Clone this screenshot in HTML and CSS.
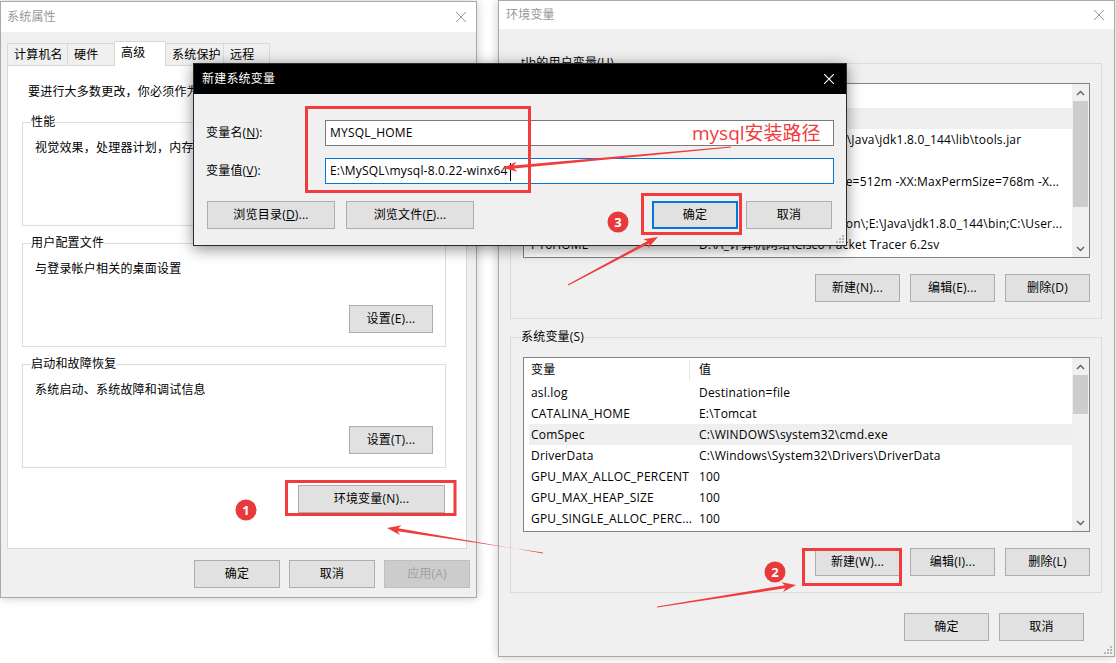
FILE: index.html
```html
<!DOCTYPE html>
<html lang="zh-CN">
<head>
<meta charset="utf-8">
<title>新建系统变量</title>
<link rel="stylesheet" href="styles.css">
</head>
<body>
<div class="desk">

  <section class="win win-env">
    <header class="tbar">
      <span class="ttl">环境变量</span>
      <svg class="xic" viewBox="0 0 10 10"><path d="M0 0L10 10M10 0L0 10" stroke="currentColor" stroke-width="1" fill="none"/></svg>
    </header>
    <div class="env-body">
      <fieldset class="grp-lg">
        <legend>tlh的用户变量(U)</legend>
        <div class="lv">
          <div class="lv-main">
            <div class="lv-row lv-head"><span class="c1">变量</span><span class="c2">值</span></div>
            <div class="lv-row sel"><span class="c1">ANDROID_HOME</span><span class="c2">E:\Android\sdk</span></div>
            <div class="lv-row"><span class="c1">CLASSPATH</span><span class="c2">%JAVA_HOME%\lib\ext\;E:\Java\jdk1.8.0_144\lib\tools.jar</span></div>
            <div class="lv-row"><span class="c1">JAVA_HOME</span><span class="c2">E:\Java\jdk1.8.0_144</span></div>
            <div class="lv-row"><span class="c1">JAVA_OPTS</span><span class="c2">-Xms10240m -XX:PermSize=512m -XX:MaxPermSize=768m -X...</span></div>
            <div class="lv-row"><span class="c1">OneDrive</span><span class="c2">C:\Users\tlh\OneDrive</span></div>
            <div class="lv-row"><span class="c1">Path</span><span class="c2">%JRE_HOME%\bin;E:\Python\;E:\Java\jdk1.8.0_144\bin;C:\User...</span></div>
            <div class="lv-row"><span class="c1">PT6HOME</span><span class="c2">D:\A_计算机网络\Cisco Packet Tracer 6.2sv</span></div>
          </div>
          <div class="sb">
            <span class="sb-btn"><svg class="chev" viewBox="0 0 9 6"><path d="M1 5L4.5 1.5L8 5" /></svg></span>
            <span class="sb-track"><span class="sb-thumb th-u"></span></span>
            <span class="sb-btn"><svg class="chev" viewBox="0 0 9 6"><path d="M1 1L4.5 4.5L8 1" /></svg></span>
          </div>
        </div>
        <div class="lv-btns">
          <button class="btn w85">新建(N)...</button>
          <button class="btn w85">编辑(E)...</button>
          <button class="btn w85">删除(D)</button>
        </div>
      </fieldset>

      <fieldset class="grp-lg grp-lg2">
        <legend>系统变量(S)</legend>
        <div class="lv">
          <div class="lv-main">
            <div class="lv-row lv-head"><span class="c1">变量</span><span class="c2">值</span></div>
            <div class="lv-row"><span class="c1">asl.log</span><span class="c2">Destination=file</span></div>
            <div class="lv-row"><span class="c1">CATALINA_HOME</span><span class="c2">E:\Tomcat</span></div>
            <div class="lv-row sel"><span class="c1">ComSpec</span><span class="c2">C:\WINDOWS\system32\cmd.exe</span></div>
            <div class="lv-row"><span class="c1">DriverData</span><span class="c2">C:\Windows\System32\Drivers\DriverData</span></div>
            <div class="lv-row"><span class="c1">GPU_MAX_ALLOC_PERCENT</span><span class="c2">100</span></div>
            <div class="lv-row"><span class="c1">GPU_MAX_HEAP_SIZE</span><span class="c2">100</span></div>
            <div class="lv-row"><span class="c1">GPU_SINGLE_ALLOC_PERC...</span><span class="c2">100</span></div>
          </div>
          <div class="sb">
            <span class="sb-btn"><svg class="chev" viewBox="0 0 9 6"><path d="M1 5L4.5 1.5L8 5" /></svg></span>
            <span class="sb-track"><span class="sb-thumb th-s"></span></span>
            <span class="sb-btn"><svg class="chev" viewBox="0 0 9 6"><path d="M1 1L4.5 4.5L8 1" /></svg></span>
          </div>
        </div>
        <div class="lv-btns">
          <button class="btn w85">新建(W)...</button>
          <button class="btn w85">编辑(I)...</button>
          <button class="btn w85">删除(L)</button>
        </div>
      </fieldset>

      <div class="env-foot">
        <button class="btn w85">确定</button>
        <button class="btn w85">取消</button>
      </div>
    </div>
    <svg class="grip grip-env" viewBox="0 0 9 9"><g fill="#b5b5b5"><rect x="7" y="1" width="2" height="2"/><rect x="4" y="4" width="2" height="2"/><rect x="7" y="4" width="2" height="2"/><rect x="1" y="7" width="2" height="2"/><rect x="4" y="7" width="2" height="2"/><rect x="7" y="7" width="2" height="2"/></g></svg>
  </section>

  <section class="win win-sys">
    <header class="tbar">
      <span class="ttl">系统属性</span>
      <svg class="xic" viewBox="0 0 10 10"><path d="M0 0L10 10M10 0L0 10" stroke="currentColor" stroke-width="1" fill="none"/></svg>
    </header>
    <div class="sys-body">
      <nav class="tabs">
        <span class="tab tab-1">计算机名</span>
        <span class="tab tab-2">硬件</span>
        <span class="tab tab-3 on">高级</span>
        <span class="tab tab-4">系统保护</span>
        <span class="tab tab-5">远程</span>
      </nav>
      <div class="panel">
        <p class="intro">要进行大多数更改，你必须作为管理员登录。</p>
        <fieldset class="grp grp-first">
          <legend>性能</legend>
          <p class="desc">视觉效果，处理器计划，内存使用，以及虚拟内存</p>
          <div class="grp-foot"><button class="btn w84">设置(S)...</button></div>
        </fieldset>
        <fieldset class="grp">
          <legend>用户配置文件</legend>
          <p class="desc">与登录帐户相关的桌面设置</p>
          <div class="grp-foot"><button class="btn w84">设置(E)...</button></div>
        </fieldset>
        <fieldset class="grp">
          <legend>启动和故障恢复</legend>
          <p class="desc">系统启动、系统故障和调试信息</p>
          <div class="grp-foot"><button class="btn w84">设置(T)...</button></div>
        </fieldset>
        <div class="env-row"><button class="btn w147">环境变量(N)...</button></div>
      </div>
      <div class="sys-foot">
        <button class="btn w86">确定</button>
        <button class="btn w86">取消</button>
        <button class="btn w86 btn-dis">应用(A)</button>
      </div>
    </div>
  </section>

  <section class="dlg">
    <header class="dbar">
      <span>新建系统变量</span>
      <svg class="xic" viewBox="0 0 10 10"><path d="M0 0L10 10M10 0L0 10" stroke="currentColor" stroke-width="1.1" fill="none"/></svg>
    </header>
    <div class="dbody">
      <div class="field">
        <span class="flabel">变量名(<u>N</u>):</span>
        <div class="input">MYSQL_HOME</div>
      </div>
      <div class="field">
        <span class="flabel">变量值(<u>V</u>):</span>
        <div class="input focus">E:\MySQL\mysql-8.0.22-winx64<span class="caret"></span></div>
      </div>
      <div class="dbtns">
        <div class="bgrp">
          <button class="btn w128">浏览目录(<u>D</u>)...</button>
          <button class="btn w128">浏览文件(<u>F</u>)...</button>
        </div>
        <div class="bgrp bgrp-r">
          <button class="btn w86 btn-def">确定</button>
          <button class="btn w86">取消</button>
        </div>
      </div>
    </div>
    <svg class="grip" viewBox="0 0 9 9"><g fill="#b5b5b5"><rect x="7" y="1" width="2" height="2"/><rect x="4" y="4" width="2" height="2"/><rect x="7" y="4" width="2" height="2"/><rect x="1" y="7" width="2" height="2"/><rect x="4" y="7" width="2" height="2"/><rect x="7" y="7" width="2" height="2"/></g></svg>
  </section>

  <svg class="marks" viewBox="0 0 1116 663">
    <g fill="none" stroke="#f03c3c" stroke-width="3">
      <rect x="286.5" y="481.5" width="168.5" height="33"/>
      <rect x="803.5" y="549.5" width="97" height="35"/>
      <rect x="306.5" y="107.5" width="223" height="84"/>
      <rect x="642.5" y="194.5" width="98" height="39"/>
    </g>
    <g fill="#f03c3c">
      <polygon points="543,553.4 398.1,528.2 401.6,525.3 387,528 400,535.1 397.7,531.2 543,552.6"/>
      <polygon points="657,607.4 785.3,588.2 783,592.1 796,585 781.4,582.3 784.9,585.2 657,606.6"/>
      <polygon points="568.3,285.4 649,243.5 648,248 658,237 643.3,239.2 647.6,240.9 567.7,284.6"/>
      <polygon points="731,146.6 513.9,165.5 516.4,161.7 503,168 517.4,171.7 514.1,168.5 731,147.4"/>
    </g>
    <g class="badge">
      <circle cx="246" cy="510" r="10.5"/>
      <circle cx="775" cy="572" r="10.5"/>
      <circle cx="618" cy="222" r="10.5"/>
    </g>
    <g class="badge-t">
      <text x="246" y="514.5">1</text>
      <text x="775" y="576.5">2</text>
      <text x="618" y="226.5">3</text>
    </g>
  </svg>
  <div class="note">mysql安装路径</div>

</div>
</body>
</html>
```

FILE: styles.css
```css
* { box-sizing: border-box; }
html, body { margin: 0; height: 100%; }
body {
  background: #fff;
  color: #000;
  font: 12px/16px "Open Sans", "Noto Sans CJK SC", sans-serif;
  letter-spacing: 0.2px;
  overflow: hidden;
}
p { margin: 0; }
u { text-decoration: underline; text-underline-offset: 1px; }

.desk { position: relative; width: 1116px; height: 663px; overflow: hidden; }

/* windows */
.win {
  position: absolute;
  background: #f0f0f0;
  border: 1px solid #a9a9a9;
  box-shadow: 0 0 9px rgba(0, 0, 0, .22);
  display: flex;
  flex-direction: column;
}
.win-sys { left: 0; top: 1px; width: 477px; height: 597px; }
.win-env { left: 498px; top: 0; width: 617px; height: 657px; }

.tbar {
  flex: none;
  background: #fff;
  color: #999;
  display: flex;
  align-items: center;
  justify-content: space-between;
}
.win-sys .tbar { height: 30px; padding: 0 10px 0 6px; }
.win-env .tbar { height: 28px; padding: 0 10px 0 7px; }
.xic { display: block; width: 10px; height: 10px; }

/* buttons */
.btn {
  flex: none;
  height: 28px;
  padding: 0;
  border: 1px solid #adadad;
  background: #e1e1e1;
  color: #000;
  font: inherit;
  letter-spacing: inherit;
  line-height: 26px;
  text-align: center;
  white-space: nowrap;
}
.w84 { width: 84px; }
.w85 { width: 85px; }
.w86 { width: 86px; }
.w128 { width: 128px; }
.w147 { width: 147px; }
.btn-dis { background: #cccccc; border-color: #bfbfbf; color: #a0a0a0; }
.btn-def { border: 2px solid #0078d7; line-height: 24px; }

/* system properties window */
.sys-body { padding: 9px 6px 0 6px; }
.tabs { display: flex; align-items: flex-end; height: 24px; }
.tab {
  height: 22px;
  margin-left: -1px;
  padding-left: 6px;
  border: 1px solid #d9d9d9;
  border-bottom: 0;
  background: #f0f0f0;
  line-height: 21px;
  white-space: nowrap;
}
.tab:first-child { margin-left: 0; }
.tab-1 { width: 61px; }
.tab-2 { width: 48px; }
.tab-3 { width: 52px; }
.tab-4 { width: 59px; }
.tab-5 { width: 47px; }
.tab.on { height: 25px; margin-bottom: -1px; background: #fff; position: relative; z-index: 1; }

.panel {
  width: 460px;
  height: 484px;
  background: #fff;
  border: 1px solid #d9d9d9;
  padding: 18px 20px 0 14px;
  display: flex;
  flex-direction: column;
}
.intro { margin-left: 6px; white-space: nowrap; }
.grp {
  margin: 9px 0 0;
  padding: 10px 12px 13px 8px;
  border: 1px solid #dcdcdc;
  min-width: 0;
}
.grp-first { margin-top: 14px; }
legend { padding: 0; line-height: 16px; }
.desc { margin-left: 4px; white-space: nowrap; }
.grp-foot { display: flex; justify-content: flex-end; margin-top: 28px; }
.env-row { display: flex; justify-content: flex-end; margin-top: 17px; padding-right: 1px; }
.sys-foot { display: flex; justify-content: flex-end; gap: 9px; margin-top: 11px; }

/* environment variables window */
.env-body { padding: 26px 12px 0 11px; display: flex; flex-direction: column; }
.grp-lg {
  margin: 0;
  padding: 12px 11px 16px 12px;
  border: 1px solid #dcdcdc;
  min-width: 0;
}
.grp-lg legend { margin-left: -2px; white-space: nowrap; }
.grp-lg2 { margin-top: 10px; }

.lv { height: 175px; border: 1px solid #828282; background: #fff; display: flex; }
.lv-main { flex: 1; min-width: 0; overflow: hidden; }
.lv-row {
  display: flex;
  height: 21px;
  margin-left: 5px;
  line-height: 21px;
  white-space: nowrap;
}
.lv-row.sel { background: #efefef; }
.lv-head { height: 24px; line-height: 24px; }
.c1 { flex: none; width: 163px; padding-left: 2px; overflow: hidden; }
.c2 { flex: 1; min-width: 0; padding-left: 7px; overflow: hidden; }
.lv-head .c1 {
  background: linear-gradient(#e5e5e5, #e5e5e5) right 2px top 2px / 1px 20px no-repeat;
}

.sb { flex: none; width: 17px; background: #f0f0f0; display: flex; flex-direction: column; }
.sb-btn { height: 17px; display: flex; align-items: center; justify-content: center; }
.chev { width: 9px; height: 6px; fill: none; stroke: #606060; stroke-width: 1.4; }
.sb-track { flex: 1; padding: 0 1px; }
.sb-thumb { display: block; background: #cdcdcd; }
.th-u { height: 106px; }
.th-s { height: 39px; }

.lv-btns { display: flex; justify-content: flex-end; gap: 10px; margin-top: 16px; }
.env-foot { display: flex; justify-content: flex-end; gap: 10px; margin-top: 20px; padding-right: 18px; }

.grip { position: absolute; right: 2px; bottom: 2px; width: 9px; height: 9px; }

/* new variable dialog */
.dlg {
  position: absolute;
  left: 193px;
  top: 63px;
  width: 654px;
  height: 183px;
  background: #f0f0f0;
  border: 1px solid #2b2b2b;
  box-shadow: 0 3px 14px rgba(0, 0, 0, .45);
  display: flex;
  flex-direction: column;
}
.dbar {
  flex: none;
  height: 30px;
  background: #000;
  color: #fff;
  display: flex;
  align-items: center;
  justify-content: space-between;
  padding: 0 12px 0 8px;
}
.dbody { padding: 26px 12px 0 12px; display: flex; flex-direction: column; gap: 12px; }
.field { display: flex; align-items: center; height: 26px; }
.flabel { flex: none; width: 119px; white-space: nowrap; }
.input {
  flex: 1;
  height: 26px;
  padding: 0 4px;
  border: 1px solid #7a7a7a;
  background: #fff;
  line-height: 24px;
  white-space: nowrap;
}
.input.focus { border-color: #0078d7; }
.caret { display: inline-block; width: 1px; height: 18px; margin-left: 2px; background: #000; vertical-align: middle; }
.dbtns { display: flex; justify-content: space-between; margin-top: 5px; }
.bgrp { display: flex; gap: 11px; padding-left: 1px; }
.bgrp-r { gap: 8px; padding: 0 2px 0 0; }

/* annotations */
.marks { position: absolute; left: 0; top: 0; width: 1116px; height: 663px; pointer-events: none; }
.badge { fill: #e83a3a; }
.badge-t { fill: #fff; font: bold 13px "Open Sans", sans-serif; text-anchor: middle; }
.note {
  position: absolute;
  left: 692px;
  top: 121px;
  color: #f03c3c;
  font-size: 19px;
  line-height: 24px;
  letter-spacing: 0;
  white-space: nowrap;
}
```
